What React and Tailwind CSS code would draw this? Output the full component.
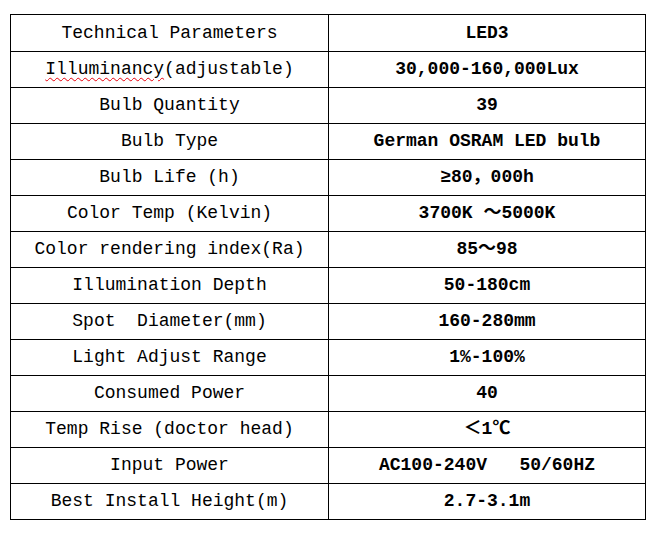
import React from 'react'

const rows = [
  ['Technical Parameters', 'LED3'],
  ['Illuminancy(adjustable)', '30,000-160,000Lux'],
  ['Bulb Quantity', '39'],
  ['Bulb Type', 'German OSRAM LED bulb'],
  ['Bulb Life (h)', '≥80，000h'],
  ['Color Temp (Kelvin)', '3700K ～5000K'],
  ['Color rendering index(Ra)', '85～98'],
  ['Illumination Depth', '50-180cm'],
  ['Spot  Diameter(mm)', '160-280mm'],
  ['Light Adjust Range', '1%-100%'],
  ['Consumed Power', '40'],
  ['Temp Rise (doctor head)', '＜1℃'],
  ['Input Power', 'AC100-240V   50/60HZ'],
  ['Best Install Height(m)', '2.7-3.1m'],
]

function Label({ text }) {
  if (text.startsWith('Illuminancy')) {
    return (
      <span>
        <span className="underline decoration-wavy decoration-red-600 decoration-1 underline-offset-[3px]">Illuminancy</span>
        (adjustable)
      </span>
    )
  }
  return <span>{text}</span>
}

export default function App() {
  return (
    <div className="min-h-screen bg-white pt-[14px] pl-[10px]">
      <div
        className="w-[636px] border border-black text-black text-[18px] whitespace-pre"
        style={{ fontFamily: '"Liberation Mono", "Noto Sans CJK SC", monospace' }}
      >
        {rows.map(([k, v], i) => (
          <div key={i} className={`grid grid-cols-[317px_1fr] h-[36px] ${i > 0 ? 'border-t border-black' : ''}`}>
            <div className="flex items-center justify-center">
              <Label text={k} />
            </div>
            <div className="flex items-center justify-center border-l border-black font-bold">
              {v}
            </div>
          </div>
        ))}
      </div>
    </div>
  )
}
